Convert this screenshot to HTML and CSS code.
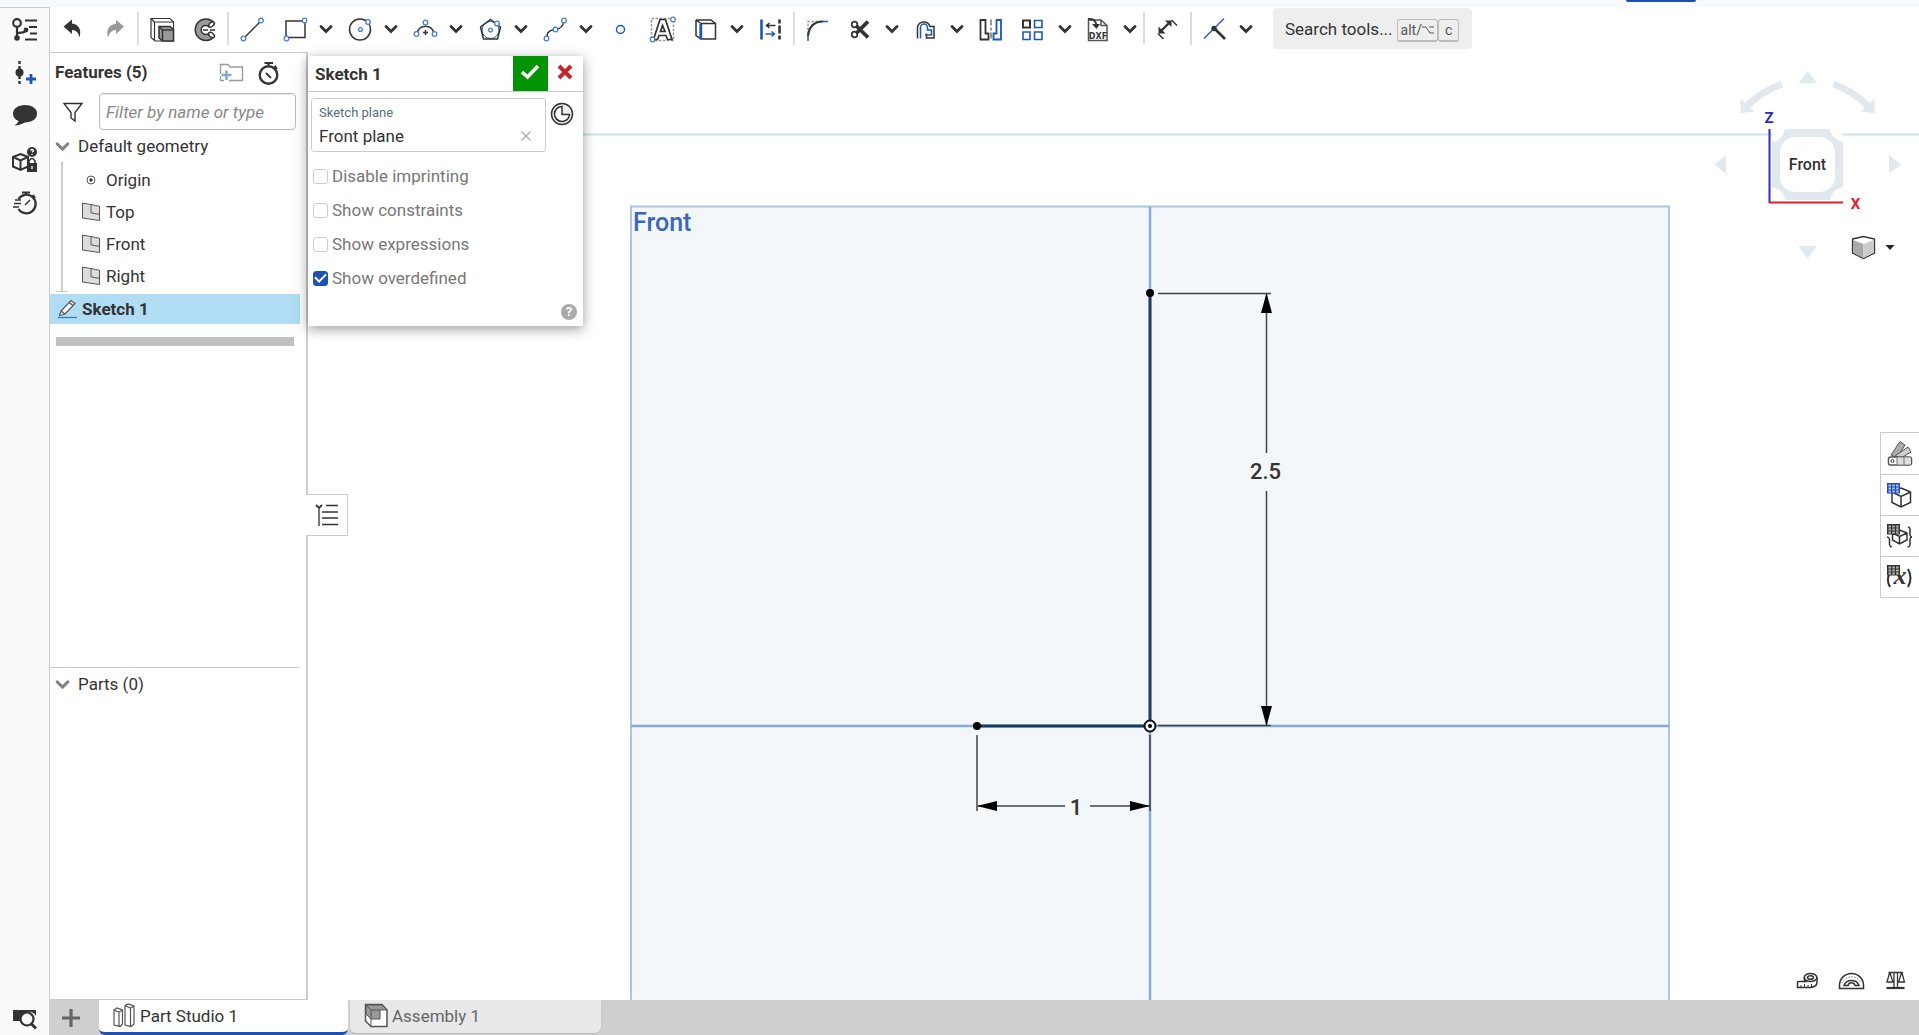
FILE: index.html
```html
<!DOCTYPE html>
<html lang="en">
<head>
<meta charset="utf-8">
<meta name="viewport" content="width=device-width, initial-scale=1">
<title>Part Studio 1</title>
<link rel="stylesheet" href="styles.css">
</head>
<body>
<svg class="defs" aria-hidden="true">
  <symbol id="chev" viewBox="0 0 14 10"><path d="M2 2.500 7 7.500 12 2.500" fill="none" stroke="#333" stroke-width="2.8" stroke-linecap="round"/></symbol>
  <symbol id="plane" viewBox="0 0 20 20"><path d="M1.500 1 18.500 4.200V18.500L1.500 16Z" fill="#dcdcdc" stroke="#555"/><path d="M10 2.500V10.800L18.500 12.400" fill="none" stroke="#555"/></symbol>
  <symbol id="table" viewBox="0 0 13 11"><g stroke="none"><path d="M0 0H13V10.500H0Z" fill="currentColor"/><path d="M1.500 1.500h2.500v2h-2.500zM5.300 1.500h2.500v2h-2.500zM9.100 1.500h2.500v2h-2.500zM1.500 4.500h2.500v2h-2.500zM5.300 4.500h2.500v2h-2.500zM9.100 4.500h2.500v2h-2.500zM1.500 7.500h2.500v2h-2.500zM5.300 7.500h2.500v2h-2.500zM9.100 7.500h2.500v2h-2.500z" fill="#fff" opacity=".65"/></g></symbol>
</svg>

<div class="app">
  <header class="topstrip"><span class="share"></span></header>

  <nav class="rail" aria-label="Panels">
    <button class="rail-btn" aria-label="Feature tree"><svg class="ic" viewBox="13 17 24 24"><g stroke-width="2.200"><circle cx="17" cy="22" r="3.800"/><path d="M17 26V37M17 33C18 30 26 34 26 28M25 19.500H37M29 26H37M30 32.500H37M25 38.500H37"/></g><circle cx="17" cy="37" r="2.800" class="solid"/><circle cx="26" cy="29" r="2.400" class="solid"/></svg></button>
    <button class="rail-btn" aria-label="Add comment marker"><svg class="ic" viewBox="13 61 24 24"><path d="M19.500 61V84" stroke-width="2.400" stroke-dasharray="3 2"/><circle cx="19.500" cy="72.500" r="4" class="solid"/><path d="M31 74V84M26 79H36" class="blue" stroke-width="2.800"/></svg></button>
    <button class="rail-btn" aria-label="Comments"><svg class="ic" viewBox="13 105 24 24"><path class="solid" d="M25 106C31.500 106 37 109 37 114.500S32 123.500 25 123.500C21 125.500 18 126.500 14 126.500C16 125.500 18 124 18.500 122C15 120.500 13 118 13 114.500C13 109.500 18.500 106 25 106Z"/></svg></button>
    <button class="rail-btn" aria-label="Configurations"><svg class="ic" viewBox="13 148 24 24"><path d="M20.500 155 28 158V167.500L20.500 171 13 167.500V158ZM13 158 20.500 161.500 28 158M20.500 161.500V171" stroke-width="2"/><circle class="solid" cx="32" cy="153" r="5"/><path class="solid" d="M27 164H37V173H27Z"/><path d="M29 164V162Q32 157 35 162V164" stroke-width="1.600"/><path d="M30.500 151.500Q32 149.500 33.500 151.500Q33.500 152.500 32 153.300M32 155V156M32 167V170" stroke="#fff" stroke-width="1.300"/></svg></button>
    <button class="rail-btn" aria-label="Performance"><svg class="ic" viewBox="13 190 24 24"><path d="M18.500 199A9.300 9.300 0 1 1 18.500 209" stroke-width="2.300"/><path d="M22 192.500H30M26 192V195M33 195 35 198" stroke-width="2.200"/><path d="M15 200H21M14 203.500H21M13 207H19M25 205 30 200" stroke-width="1.500"/></svg></button>
    <button class="rail-btn rail-last" aria-label="Search tabs"><svg class="ic" viewBox="13 1007 24 24"><path class="solid" d="M13 1010H36V1016A8 8 0 0 0 21 1021H13Z"/><circle cx="27" cy="1019" r="6.500" fill="#fafafa" stroke-width="2.200"/><path d="M31.500 1024 36 1028.500" stroke-width="3"/></svg></button>
  </nav>

  <div class="toolbar" role="toolbar" aria-label="Sketch tools">
    <button class="tool" aria-label="Undo"><svg class="ic" viewBox="59 17 24 24"><path class="solid" d="M62.500 26.500 71 19.500V23.500C77 24 81 29 78.500 37.500C77.500 33 76 30.500 71 30V34Z"/></svg></button>
    <button class="tool" aria-label="Redo"><svg class="ic" viewBox="103 17 24 24"><path fill="#999" stroke="none" d="M124 26.500 116 20V24C110 24 105.500 29 108 37.500C109.500 33 111 30.500 116 30V34Z"/></svg></button>
    <span class="sep"></span>
    <button class="tool" aria-label="Extrude"><svg class="ic" viewBox="150 17 24 24"><path d="M151 18.500H170L173.500 22V41H155L151 37.500Z" stroke-width="1.200"/><path d="M154.500 22H173.500M154.500 22V40M151 18.500 154.500 22" stroke-width="1.200"/><path d="M159 26.500H170L173.500 29.500V41H162.500L159 38Z" fill="#999"/><path d="M159 26.500 162.500 30H173.500M162.500 30V41"/></svg></button>
    <button class="tool" aria-label="Revolve"><svg class="ic" viewBox="193 17 24 24"><path fill="#999" d="M214 22.500A10.800 10.800 0 1 0 214 37L209 33A4.500 4.500 0 1 1 209 27Z"/><ellipse cx="211.500" cy="24.500" rx="2" ry="3.300" transform="rotate(50 211.500 24.500)" fill="#fff"/><ellipse cx="211.500" cy="35" rx="2" ry="3.300" transform="rotate(-50 211.500 35)" fill="#fff"/><path d="M203 30H217" stroke-dasharray="5 2"/></svg></button>
    <span class="sep"></span>
    <button class="tool" aria-label="Line"><svg class="ic" viewBox="240 17 24 24"><path d="M245 37 260 22"/><g class="pt"><circle cx="243.500" cy="38.500" r="2.300"/><circle cx="261" cy="20.500" r="2.300"/></g></svg></button>
    <div class="group"><button class="tool" aria-label="Rectangle"><svg class="ic" viewBox="283 17 24 24"><path d="M286 21H305V37.500H286Z"/><g class="pt"><circle cx="304.500" cy="20.500" r="2.300"/><circle cx="286.500" cy="38.500" r="2.300"/></g></svg></button><button class="drop" aria-label="More rectangles"><svg><use href="#chev"/></svg></button></div>
    <div class="group"><button class="tool" aria-label="Circle"><svg class="ic" viewBox="348 17 24 24"><circle cx="360" cy="29.500" r="10.500"/><g class="pt"><circle cx="368" cy="22" r="2.300"/><circle cx="360.500" cy="29.500" r="1.900"/></g></svg></button><button class="drop" aria-label="More circles"><svg><use href="#chev"/></svg></button></div>
    <div class="group"><button class="tool" aria-label="Arc"><svg class="ic" viewBox="413 17 24 24"><path d="M417 33A9 10 0 0 1 434 33"/><path d="M423 32.500H428M425.500 30V35"/><g class="pt"><circle cx="416.500" cy="34" r="2.300"/><circle cx="434.500" cy="34" r="2.300"/><circle cx="425.500" cy="22.500" r="2.300"/></g></svg></button><button class="drop" aria-label="More arcs"><svg><use href="#chev"/></svg></button></div>
    <div class="group"><button class="tool" aria-label="Polygon"><svg class="ic" viewBox="478 17 24 24"><circle class="blue" cx="490.500" cy="30" r="8.500" stroke-width="1"/><path d="M490.500 19.500 500.500 27 497.500 39H483.500L480.500 27Z"/><g class="pt"><circle cx="497" cy="23.500" r="2.300"/><circle cx="490.500" cy="30" r="1.900"/></g></svg></button><button class="drop" aria-label="More polygons"><svg><use href="#chev"/></svg></button></div>
    <div class="group"><button class="tool" aria-label="Spline"><svg class="ic" viewBox="543 17 24 24"><path d="M547 37C547 31 551 30 555.500 29.500S563 27 564 21"/><g class="pt"><circle cx="546.500" cy="38.500" r="2.300"/><circle cx="555.500" cy="29.500" r="2.300"/><circle cx="564" cy="20.500" r="2.300"/></g></svg></button><button class="drop" aria-label="More splines"><svg><use href="#chev"/></svg></button></div>
    <button class="tool" aria-label="Point"><svg class="ic" viewBox="608 17 24 24"><circle class="blue" cx="620.500" cy="29.500" r="4"/></svg></button>
    <button class="tool" aria-label="Text"><svg class="ic" viewBox="651 17 24 24"><path d="M651.500 18.500H673.500V40.500H651.500Z" stroke="#999" stroke-dasharray="2.500 1.500"/><path fill="#fff" stroke-width="1.700" d="M660 19.500H665.500L672 39.500H667.500L666 35.500H659L657.500 39.500H653.500ZM662.500 25.500 660.500 31.500H665Z"/><g class="pt"><circle cx="673" cy="19.500" r="2.300"/><circle cx="652.500" cy="39.500" r="2.300"/></g></svg></button>
    <div class="group"><button class="tool" aria-label="Use"><svg class="ic" viewBox="694 17 24 24"><path d="M701 23.500H715.500V39H701ZM696 20H711L715.500 23.500M696 20 701 23.500M696 20V35.500L701 39"/><path class="blue" d="M700.800 24V39" stroke-width="2.800"/></svg></button><button class="drop" aria-label="More projections"><svg><use href="#chev"/></svg></button></div>
    <button class="tool" aria-label="Transform"><svg class="ic" viewBox="759 17 24 24"><path class="blue" d="M761.500 19.500V39.500" stroke-width="2.600"/><path d="M779.500 19.500V40" stroke-width="2.600" stroke-dasharray="4 2 8 2 4 2"/><path d="M775.500 25.500H767M769.500 23 766.500 25.500 769.500 28"/><path class="blue" d="M765.500 34H774M771.500 31.500 774.500 34 771.500 36.500"/></svg></button>
    <span class="sep"></span>
    <button class="tool" aria-label="Fillet"><svg class="ic" viewBox="806 17 24 24"><path d="M808 34V21.500H821" stroke="#999" stroke-dasharray="2.500 1.500"/><path d="M808 36C809 27 814 21.500 823 21.500" stroke-width="2.200"/><path class="blue" d="M808 35.500V41M822 21.500H828"/></svg></button>
    <div class="group"><button class="tool" aria-label="Trim"><svg class="ic" viewBox="849 17 24 24"><path d="M856 25.500 868 37.500M856 33.500 868 21.500" stroke-width="3.800"/><circle cx="854.500" cy="24.500" r="2.800" stroke-width="1.700"/><circle cx="854.500" cy="34.500" r="2.800" stroke-width="1.700"/></svg></button><button class="drop" aria-label="More trims"><svg><use href="#chev"/></svg></button></div>
    <div class="group"><button class="tool" aria-label="Offset"><svg class="ic" viewBox="914 17 24 24"><path d="M917.500 38.500V27A6.500 6.500 0 0 1 930 26.500H934V38H926.500V33.500"/><path class="blue" d="M920.500 38.500V27.500A3.500 3.500 0 0 1 927.500 27.500V30H931.500V35H925"/></svg></button><button class="drop" aria-label="More offsets"><svg><use href="#chev"/></svg></button></div>
    <button class="tool" aria-label="Mirror"><svg class="ic" viewBox="979 17 24 24"><path d="M980.500 20H985.500V33.500H988.500V39.500H980.500Z" stroke-width="1.800"/><path class="blue" d="M1001 20H996.500V33.500H993.500V39.500H1001Z" stroke-width="1.800"/><path d="M991 19.500V40" stroke="#777" stroke-dasharray="6 2 3 2"/></svg></button>
    <div class="group"><button class="tool" aria-label="Pattern"><svg class="ic" viewBox="1022 17 24 24"><path d="M1023 20.500H1030V27.500H1023Z" stroke-width="2"/><path class="blue" stroke-width="1.600" d="M1034.500 20.500H1042V27.500H1034.500ZM1023 32H1030V39.500H1023ZM1034.500 32H1042V39.500H1034.500Z"/></svg></button><button class="drop" aria-label="More patterns"><svg><use href="#chev"/></svg></button></div>
    <div class="group"><button class="tool" aria-label="Insert DXF"><svg class="ic" viewBox="1087 17 24 24"><path d="M1088.500 20H1101L1107 25.500V40.500H1088.500ZM1101 20V25.500H1107" stroke="#555"/><path d="M1088 19C1092 18.500 1096 20 1096.500 25" stroke-width="2"/><path class="solid" d="M1092 24H1100L1096.500 29Z"/><text x="1098" y="38.500" class="dxf" text-anchor="middle">DXF</text></svg></button><button class="drop" aria-label="More imports"><svg><use href="#chev"/></svg></button></div>
    <span class="sep"></span>
    <button class="tool" aria-label="Dimension"><svg class="ic" viewBox="1156 17 24 24"><path d="M1161.500 30.500 1169.500 22.500" stroke-width="2.400"/><path class="solid" d="M1158.500 26.500V33.500H1165.500ZM1165 20.500H1171.500V27Z"/><path d="M1158 33.500 1163.500 39M1171.500 20 1177 25.500"/></svg></button>
    <span class="sep"></span>
    <div class="group"><button class="tool" aria-label="Constraints"><svg class="ic" viewBox="1203 17 24 24"><path class="blue" d="M1204 38.500 1224 18.500" stroke-width="1.200"/><path d="M1214.500 28.500 1225 39" stroke-width="2.600"/><circle class="solid" cx="1214" cy="28.500" r="2.700"/></svg></button><button class="drop" aria-label="More constraints"><svg><use href="#chev"/></svg></button></div>
    <button class="search">Search tools...<span class="keys"><kbd>alt/<svg class="opt" viewBox="0 0 12 10"><path d="M0 2H4L8 8H12M7 2H12" fill="none" stroke="#555"/></svg></kbd><kbd>c</kbd></span></button>
  </div>

  <aside class="panel">
    <section class="features">
      <div class="panel-head">
        <h2>Features (5)</h2>
        <button class="plain" aria-label="New folder"><svg class="ic wide" viewBox="219 62 26 26"><path d="M220.500 76V66.500H228L230 69H242.500V82.500H229M220.500 78V82.500H224" stroke="#999" stroke-width="1.300"/><path d="M226.500 72.500V82M221.500 77H231.500" stroke="#85a8dc" stroke-width="2.500"/></svg></button>
        <button class="plain" aria-label="Rollback timing"><svg class="ic wide" viewBox="256 61 26 26"><circle cx="268.500" cy="76" r="8.800" stroke-width="2.400"/><path d="M264.500 64H273M268.500 64V67M274.500 67 277 70" stroke-width="2.200"/><path d="M266 74 271 79" stroke-width="1.800"/></svg></button>
      </div>
      <div class="filter">
        <button class="plain" aria-label="Filter"><svg class="ic" viewBox="61 101 24 24"><path d="M64 104.500H82L75 113.500V122L71 119V113.500Z" stroke-width="1.400"/></svg></button>
        <input type="text" aria-label="Filter features" placeholder="Filter by name or type">
      </div>
      <div class="row folder"><svg class="fold"><use href="#chev"/></svg>Default geometry</div>
      <ul class="children">
        <li><svg class="node" viewBox="0 0 20 20"><circle cx="10" cy="10" r="4" fill="none" stroke="#555"/><circle cx="10" cy="10" r="1.700" fill="#333"/></svg>Origin</li>
        <li><svg class="node"><use href="#plane"/></svg>Top</li>
        <li><svg class="node"><use href="#plane"/></svg>Front</li>
        <li><svg class="node"><use href="#plane"/></svg>Right</li>
      </ul>
      <div class="row active"><svg class="node" viewBox="0 0 20 20"><path d="M2.500 16.500 4 12 14 1.500 18 4.500 8 15ZM4 12 8 15M12 3.500 16 6.500" fill="#fff" stroke="#555" stroke-width="1.200"/><path d="M1 18.500H20" stroke="#3f6fc4" stroke-width="1.200"/></svg>Sketch 1</div>
      <div class="rollbar"></div>
    </section>
    <section class="parts">
      <div class="row folder"><svg class="fold"><use href="#chev"/></svg>Parts (0)</div>
    </section>
  </aside>

  <main class="view">
    <svg class="scene" viewBox="308 52 1611 948" preserveAspectRatio="xMidYMid slice">
      <path d="M308 134.500H1919" stroke="#c6e4f7" stroke-width="2"/>
      <rect x="631" y="206.500" width="1038" height="1038" fill="#f3f7fa" stroke="#aac5de" stroke-width="2"/>
      <path d="M631 726H1669M1150 207V1100" stroke="#86abd9" stroke-width="2.500"/>
      <text x="633" y="231" class="plane-name">Front</text>
      <path d="M1150 293V726" stroke="#1f3f6b" stroke-width="3"/>
      <path d="M977 726H1150" stroke="#17395c" stroke-width="3"/>
      <g stroke="#444" stroke-width="1.500">
        <path d="M1158 293.500H1271M1158 725.500H1271M1266.500 294V453M1266.500 491V725"/>
        <path d="M977 735V811M1150 735V811M978 806H1065M1090 806H1150"/>
      </g>
      <path d="M1266.500 293 1261 313H1272ZM1266.500 726 1261 706H1272ZM977 806 997 801V811ZM1150 806 1130 801V811Z"/>
      <circle cx="1150" cy="293" r="4"/><circle cx="977" cy="726" r="4"/>
      <circle cx="1150" cy="726" r="5.500" fill="#f3f7fa" stroke="#111" stroke-width="2"/><circle cx="1150" cy="726" r="2"/>
      <text x="1265.500" y="479" class="dim">2.5</text>
      <text x="1076" y="815" class="dim">1</text>
    </svg>

    <form class="dialog">
      <div class="dialog-head">
        <h2>Sketch 1</h2>
        <button type="button" class="accept" aria-label="Accept"><svg viewBox="0 0 22 18"><path d="M3 9 8.500 14 19 3" fill="none" stroke="#fff" stroke-width="3.600"/></svg></button>
        <button type="button" class="cancel" aria-label="Cancel"><svg viewBox="0 0 16 16"><path d="M2 2 14 14M14 2 2 14" stroke="#c1272d" stroke-width="4"/></svg></button>
      </div>
      <div class="plane-row">
        <div class="field">
          <label for="plane-in">Sketch plane</label>
          <div class="field-line"><input id="plane-in" type="text" value="Front plane"><button type="button" class="plain" aria-label="Clear"><svg class="clear" viewBox="0 0 12 12"><path d="M1.500 1.500 10.500 10.500M10.500 1.500 1.500 10.500" stroke="#aaa" stroke-width="1.300"/></svg></button></div>
        </div>
        <button type="button" class="plain final" aria-label="Final"><svg class="ic" viewBox="0 0 24 24"><circle cx="12" cy="12" r="10.500" fill="#eee"/><path fill="#fff" d="M12 4.500A7.500 7.500 0 1 0 19.500 12.500H12Z"/></svg></button>
      </div>
      <label class="check"><input type="checkbox">Disable imprinting</label>
      <label class="check"><input type="checkbox">Show constraints</label>
      <label class="check"><input type="checkbox">Show expressions</label>
      <label class="check"><input type="checkbox" checked>Show overdefined</label>
      <button type="button" class="help" aria-label="Help">?</button>
    </form>

    <button class="toggle" aria-label="Toggle feature list"><svg class="ic" viewBox="0 0 24 24"><path d="M1 2 4 5 7 2" stroke-width="1.800"/><path d="M4 6V23" stroke="#777" stroke-width="2"/><path d="M11 2.500H23M7 9H23M7 15H23M7 21.500H23"/></svg></button>

    <svg class="cube" viewBox="1700 52 219 228">
      <path d="M1772 131H1843V138H1772Z" fill="#fff"/>
      <path fill="#e1e8ee" d="M1807.500 71 1817 83H1798.500ZM1807.500 258.500 1798.500 246H1817ZM1714 164.500 1726 155V173.500ZM1901.500 164.500 1889 155V173.500Z"/>
      <g fill="none" stroke="#e1e8ee" stroke-width="7"><path d="M1782 84Q1762 91 1746 107M1833.500 84Q1853 91 1869 107"/></g>
      <path fill="#e1e8ee" d="M1740.500 98.500V113L1754.500 111.500ZM1874.500 98.500V113L1860.500 111.500Z"/>
      <path fill="#e1e8ee" d="M1785 129H1830Q1832 140 1843 142V187Q1832 189 1830 200H1785Q1783 189 1772 187V142Q1783 140 1785 129Z"/>
      <rect x="1780" y="137" width="55" height="55" rx="15" fill="#fff"/>
      <path d="M1769.500 129V203" stroke="#2a2ad0" stroke-width="2"/><path d="M1769 202.500H1843" stroke="#e0202a" stroke-width="2"/>
      <text x="1769" y="123" class="axis" fill="#2a2ad0">Z</text>
      <text x="1855.500" y="209" class="axis" fill="#e0202a">X</text>
      <text x="1807.500" y="170" class="face">Front</text>
      <path d="M1852.500 239 1863.500 236.500 1874.500 239V253L1863.500 258.500 1852.500 253Z" fill="#fff" stroke="#333" stroke-width="1.300"/>
      <path d="M1853 240 1863.500 244V258L1853 252.500Z" fill="#aaa"/><path d="M1874 240 1863.500 244V258L1874 252.500Z" fill="#ccc"/>
      <path d="M1885.500 245H1894.500L1890 250Z" fill="#222"/>
    </svg>

    <div class="side-tools">
      <button aria-label="Appearance"><svg class="ic" viewBox="1889 442 24 24"><path d="M1892 455 1901 441.500 1906 445 1898 458Z" fill="#aaa" stroke="#555" stroke-width="1"/><path d="M1896 456 1909 447 1912 452 1902 458Z" fill="#ccc" stroke="#555" stroke-width="1"/><rect x="1889.500" y="457" width="23" height="8" rx="2" fill="#fff" stroke="#555"/><path d="M1898 457.500H1912V464.500H1898Z" fill="#ddd" stroke="none"/><path d="M1898 457V465M1905 457V465" stroke="#777" stroke-width="1"/><circle cx="1893.500" cy="461" r="1.500" stroke-width="1"/></svg></button>
      <button aria-label="Configuration"><svg class="ic" viewBox="1889 483 24 24"><path d="M1902 488 1911.500 492V502.500L1902 507 1893 502.500V492ZM1893 492 1902 496.500 1911.500 492M1902 496.500V507" fill="#fff"/><use href="#table" x="1888" y="483" width="13" height="11" color="#1d4fb4"/></svg></button>
      <button aria-label="Properties"><svg class="ic" viewBox="1889 524 24 24"><path d="M1900.500 530 1908 533V540L1900.500 544 1893.500 540V533ZM1893.500 533 1900.500 536.500 1908 533M1900.500 536.500V544"/><path d="M1893 547Q1890 547 1890.500 542T1888 537M1909 527Q1911.500 527 1911 532T1913 537Q1910.500 537 1911 542T1908.500 547"/><use href="#table" x="1888" y="524" width="13" height="11" color="#333"/></svg></button>
      <button aria-label="Variables"><svg class="ic" viewBox="1889 565 24 24"><path d="M1890.500 574Q1887 580 1891 587M1909 569Q1914 578 1909 587" stroke-width="2"/><text x="1901" y="584" class="var">x</text><use href="#table" x="1888" y="565" width="13" height="11" color="#333"/></svg></button>
    </div>

    <div class="measure">
      <button class="plain" aria-label="Measure"><svg class="ic" viewBox="1796 969 24 24"><path d="M1797.500 981.500H1807M1797.500 981.500V987.500H1810Q1817 987 1817 982V977M1804.500 981V977"/><ellipse cx="1810.500" cy="977.500" rx="6.300" ry="4"/><ellipse cx="1810.500" cy="977.500" rx="3" ry="1.800"/><path d="M1801 987V985M1804.500 987V984M1808 987V985M1811.500 987V984" stroke-width="1"/></svg></button>
      <button class="plain" aria-label="Protractor"><svg class="ic" viewBox="1840 969 24 24"><path d="M1839.500 988.500V985A12 11.500 0 0 1 1863.500 985V988.500Z"/><path d="M1844 985.500A8 7.500 0 0 1 1859 985.500H1855A3.600 3.600 0 0 0 1848 985.500Z"/><path d="M1842 983A10 9 0 0 1 1861 983" stroke-width="1" stroke-dasharray="1 2"/></svg></button>
      <button class="plain" aria-label="Mass properties"><svg class="ic" viewBox="1884 969 24 24"><path d="M1888.500 972.500H1903M1894 972.500V987M1897.500 972.500V987M1889.500 973 1887 982H1893L1890 973M1901.500 973 1898.500 982H1904.500L1902 973" stroke-width="1.300"/><path d="M1886.500 988H1904.500" stroke-width="2.200"/></svg></button>
    </div>
  </main>

  <footer class="tabs">
    <button class="add" aria-label="Insert new tab"><svg viewBox="0 0 20 20"><path d="M10 1V19M1 10H19" stroke="#666" stroke-width="3.200"/></svg></button>
    <button class="tab current"><svg class="ic" viewBox="112 1004 24 24"><path d="M114 1010 117 1008 122.500 1010V1024L120 1026.500 114 1025ZM114 1010 119 1012 122.500 1010M119 1012V1026M125 1005.500 128 1004 134 1006V1024L131 1026.500 125 1025ZM125 1005.500 130.500 1008 134 1006M130.500 1008V1026" stroke="#555" stroke-width="1.200"/></svg>Part Studio 1</button>
    <button class="tab"><svg class="ic" viewBox="364 1004 24 24"><path d="M365.500 1004.500H382L387 1010V1026.500H371L365.500 1021Z" fill="#fff" stroke="#555"/><path d="M366 1005H382L387 1010H380V1019H371L366 1014Z" fill="#999" stroke="#555" stroke-width="1"/><path d="M366 1005 371 1010H380M371 1010V1026" stroke="#555" stroke-width="1"/></svg>Assembly 1</button>
  </footer>
</div>
</body>
</html>
```
FILE: styles.css
```css
* { box-sizing: border-box; }
body {
  margin: 0;
  font: 17px/20px Roboto, "Liberation Sans", sans-serif;
  color: #333;
  background: #fff;
}
button, input { font: inherit; color: inherit; }
button { border: 0; background: none; padding: 0; cursor: pointer; }
h2 { margin: 0; font-size: 17px; line-height: 20px; font-weight: 700; }
svg { display: block; flex: none; }
.defs { position: absolute; width: 0; height: 0; }
.ic {
  width: 24px;
  height: 24px;
  overflow: visible;
  fill: none;
  stroke: #333;
  stroke-width: 1.5;
}
.wide { width: 26px; height: 26px; }
.solid { fill: #333; stroke: none; }
.blue { stroke: #1d57b8; }
.pt { fill: #fff; stroke: #4a7fd6; stroke-width: 1.3; }
.plain { display: grid; place-items: center; }

.app {
  display: grid;
  grid-template: "top top top" 7px "rail tools tools" 45px "rail panel view" 1fr "rail tabs tabs" 35px / 50px 258px 1fr;
  height: 100vh;
}

.topstrip { grid-area: top; display: flex; justify-content: flex-end; background: #f7f9fc; padding-right: 223px; }
.share { width: 70px; height: 2px; background: #1b51b3; border-radius: 0 0 4px 4px; }

.rail {
  grid-area: rail;
  display: flex;
  flex-direction: column;
  background: #fafafa;
  border-top: 1px solid #ccc;
  border-right: 1px solid #ccc;
}
.rail-btn { display: grid; place-items: center; height: 43px; }
.rail-last { margin-top: auto; height: 32px; }

.toolbar { grid-area: tools; display: flex; align-items: center; padding-bottom: 2px; background: #fff; }
.tool { display: grid; place-items: center; width: 43px; height: 40px; flex: none; }
.group { display: flex; flex: none; }
.drop { display: grid; place-items: center; width: 22px; padding-right: 3px; }
.drop svg, .fold { width: 14px; height: 10px; }
.sep { width: 2px; height: 33px; margin: 0 1px; background: #ddd; flex: none; }
.search {
  display: flex;
  align-items: center;
  gap: 4px;
  height: 41px;
  margin-left: 15px;
  padding: 0 13px 0 12px;
  background: #eee;
  border-radius: 4px;
  white-space: nowrap;
}
.keys { display: flex; padding-top: 3px; }
kbd {
  display: flex;
  align-items: center;
  height: 23px;
  padding: 0 3px;
  border: 1px solid #bbb;
  border-bottom-width: 2px;
  border-radius: 3px;
  font: 14px/20px Roboto, sans-serif;
  color: #555;
}
kbd + kbd { padding: 0 6px; }
.opt { width: 12px; height: 10px; }
.dxf { font: 700 8px "DejaVu Sans", sans-serif; fill: #333; stroke: none; }

.panel {
  grid-area: panel;
  display: flex;
  flex-direction: column;
  border: solid #ccc;
  border-width: 1px 2px 1px 0;
}
.features { flex: 615; padding-right: 6px; }
.parts { flex: 331; margin-right: 6px; border-top: 1px solid #ccc; }
.panel-head { display: flex; align-items: center; height: 38px; margin-bottom: 2px; padding: 0 18px 0 5px; }
.panel-head h2 { margin-right: auto; }
.panel-head .plain { margin-left: 11px; padding-top: 2px; }
.filter { display: flex; align-items: center; padding: 0 4px 0 11px; gap: 14px; }
.filter input {
  flex: 1;
  min-width: 0;
  height: 37px;
  padding: 0 6px;
  border: 1px solid #bbb;
  border-radius: 4px;
  box-shadow: inset 0 1px 1px rgba(0, 0, 0, .1);
}
.filter input::placeholder { color: #888; font-style: italic; opacity: 1; }
.row { display: flex; align-items: center; height: 32px; }
.folder { gap: 8px; padding-left: 5px; }
.fold { width: 15px; height: 11px; opacity: .6; }
.children {
  position: relative;
  margin: 0 0 2px 11px;
  padding: 2px 0 0 18px;
  list-style: none;
  border-left: 2px solid #ccc;
}
.children::after {
  content: "";
  position: absolute;
  bottom: 0;
  left: -7px;
  width: 12px;
  border-bottom: 1px solid #ccc;
}
.children li { display: flex; align-items: center; gap: 5px; height: 32px; }
.node { width: 20px; height: 20px; }
.active { height: 30px; gap: 5px; padding-left: 7px; background: #b0ddf4; font-weight: 700; }
.rollbar { height: 9px; margin: 13px 6px 0; background: #c1c1c1; }

.view { grid-area: view; position: relative; min-width: 0; background: #fff; }
.scene { position: absolute; width: 100%; height: 100%; }
.plane-name { font: 500 25px Roboto, sans-serif; fill: #3c66bd; }
.dim { font: 500 22px Roboto, sans-serif; fill: #333; text-anchor: middle; }

.dialog {
  position: absolute;
  top: 4px;
  left: 0;
  width: 275px;
  height: 270px;
  background: #fff;
  box-shadow: 0 3px 12px rgba(0, 0, 0, .4);
}
.dialog-head { display: flex; align-items: center; height: 36px; padding-left: 7px; border-bottom: 1px solid #ccc; }
.dialog-head h2 { margin-right: auto; }
.accept, .cancel { display: grid; place-items: center; width: 35px; height: 35px; padding: 0 1px 3px 0; }
.accept { background: #009400; }
.accept svg { width: 22px; height: 18px; }
.cancel svg { width: 16px; height: 16px; }
.plane-row { display: flex; gap: 4px; padding: 6px 3px 7px; }
.field { width: 235px; height: 54px; padding: 5px 7px; border: 1px solid #ccc; border-radius: 3px; }
.field label { display: block; font-size: 13px; line-height: 18px; color: #5d6b7a; }
.field-line { display: flex; align-items: center; padding-right: 6px; }
.field input { flex: 1; min-width: 0; height: 28px; padding: 0; border: 0; background: none; }
.clear { width: 12px; height: 12px; }
.final { height: 32px; }
.check { display: flex; align-items: center; gap: 4px; height: 34px; padding-left: 5px; color: #777; }
.check input {
  appearance: none;
  display: grid;
  place-items: center;
  width: 15px;
  height: 15px;
  margin: 0;
  border: 1px solid #ccc;
  border-radius: 3px;
  background: #fff;
}
.check input:checked { background: #1b51b3; border-color: #1b51b3; }
.check input:checked::before {
  content: "";
  width: 9px;
  height: 5px;
  margin-bottom: 3px;
  border: solid #fff;
  border-width: 0 0 2px 2px;
  transform: rotate(-45deg);
}
.help {
  display: block;
  width: 16px;
  height: 16px;
  margin: 9px 6px 0 auto;
  border-radius: 50%;
  background: #aaa;
  color: #fff;
  font-size: 13px;
  line-height: 16px;
  font-weight: 700;
}

.toggle {
  position: absolute;
  top: 442px;
  left: -2px;
  display: grid;
  place-items: center;
  width: 42px;
  height: 42px;
  background: #fff;
  border: 1px solid #ccc;
  border-left: 0;
}
.cube { position: absolute; top: 0; right: 0; width: 219px; height: 228px; }
.axis { font: 700 15px Roboto, sans-serif; text-anchor: middle; }
.face { font: 500 16px Roboto, sans-serif; fill: #333; text-anchor: middle; }
.side-tools {
  position: absolute;
  top: 380px;
  right: 0;
  width: 39px;
  background: #fff;
  border: 1px solid #ccc;
  border-right: 0;
}
.side-tools button { display: grid; place-items: center; width: 100%; height: 41px; }
.side-tools button + button { border-top: 1px solid #ccc; }
.var { font: italic 700 26px "Liberation Serif", serif; fill: #333; stroke: none; text-anchor: middle; }
.measure { position: absolute; right: 11px; bottom: 7px; display: flex; gap: 20px; }

.tabs { grid-area: tabs; display: flex; background: #cfcfcf; }
.add { display: grid; place-items: center; width: 49px; padding-right: 8px; }
.add svg { width: 20px; height: 20px; }
.tab {
  display: flex;
  align-items: center;
  gap: 4px;
  width: 251px;
  height: 33px;
  padding: 0 0 2px 14px;
  background: #e8e8e8;
  border-radius: 0 0 6px 6px;
  box-shadow: 0 1px 1px #bbb;
  color: #666;
}
.current {
  width: 249px;
  height: 35px;
  margin-right: 2px;
  padding: 0 0 0 13px;
  background: #fff;
  border-bottom: 3px solid #1b51b3;
  box-shadow: none;
  color: #333;
}
```
